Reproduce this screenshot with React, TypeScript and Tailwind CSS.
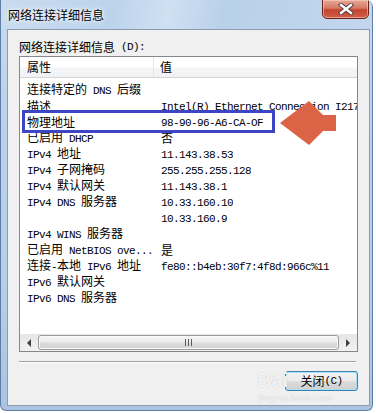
import React from "react";

const CJK = "font-['Noto_Sans_CJK_SC',sans-serif] text-[12px]";
const MONO = "font-['Liberation_Mono','DejaVu_Sans_Mono',monospace] text-[11px] tracking-[-0.6px]";

function T({ s }: { s: string }) {
  const parts = s.split(/([\x00-\x7f]+)/).filter((p) => p.length > 0);
  return (
    <>
      {parts.map((p, i) =>
        /^[\x00-\x7f]+$/.test(p) ? (
          <span key={i} className={MONO + " whitespace-pre"}>
            {p}
          </span>
        ) : (
          <span key={i} className={CJK}>
            {p}
          </span>
        )
      )}
    </>
  );
}

const rows: [string, string][] = [
  ["连接特定的 DNS 后缀", ""],
  ["描述", "Intel(R) Ethernet Connection I217-LM"],
  ["物理地址", "98-90-96-A6-CA-OF"],
  ["已启用 DHCP", "否"],
  ["IPv4 地址", "11.143.38.53"],
  ["IPv4 子网掩码", "255.255.255.128"],
  ["IPv4 默认网关", "11.143.38.1"],
  ["IPv4 DNS 服务器", "10.33.160.10"],
  ["", "10.33.160.9"],
  ["IPv4 WINS 服务器", ""],
  ["已启用 NetBIOS ove...", "是"],
  ["连接-本地 IPv6 地址", "fe80::b4eb:30f7:4f8d:966c%11"],
  ["IPv6 默认网关", ""],
  ["IPv6 DNS 服务器", ""],
];

export default function App() {
  return (
    <div className="relative w-[376px] h-[413px] bg-white overflow-hidden text-black">
      {/* Window */}
      <div className="w-[373px] h-[411px] flex flex-col rounded-tr-[7px] rounded-br-[6px] rounded-bl-[6px] border-r border-b border-l border-[#5f7ea6] bg-[linear-gradient(to_bottom,#c6daef_0%,#bcd2ea_30%,#b7cee8_70%,#a9c3e1_100%)] overflow-hidden">
        {/* Title bar */}
        <div className="relative h-[29px] shrink-0 flex items-center pl-[7px] bg-[linear-gradient(100deg,#c9dcf0_0%,#bcd3eb_30%,#cfe0f2_45%,#b9d0ea_60%,#c2d7ee_100%)]">
          <span className={CJK + " leading-[16px] [text-shadow:0_0_6px_#ffffff,0_0_3px_#ffffff]"}>网络连接详细信息</span>
          <div className="absolute right-[3px] top-[-1px] w-[47px] h-[20px] rounded-b-[5px] border border-[#6b2418] bg-[linear-gradient(to_bottom,#e6a896_0%,#d77a66_45%,#c4432e_55%,#d0604a_100%)] shadow-[inset_0_0_0_1px_rgba(255,220,210,0.5)] flex items-center justify-center">
            <svg width="16" height="12" viewBox="0 0 16 12">
              <path d="M3 2 L13 10 M13 2 L3 10" stroke="#4a3a3a" strokeWidth="4.2" strokeLinecap="square" />
              <path d="M3 2 L13 10 M13 2 L3 10" stroke="#ffffff" strokeWidth="2.4" strokeLinecap="square" />
            </svg>
          </div>
        </div>

        {/* Client area */}
        <div className="ml-[6px] w-[363px] h-[377px] shrink-0 border border-[#8c9cb0] bg-[#f0f0f0] flex flex-col">
          <div className="mt-[9px] ml-[11px] leading-[16px] h-[16px] flex items-center">
            <T s="网络连接详细信息 (D):" />
          </div>

          {/* List */}
          <div className="mt-[1px] ml-[11px] w-[339px] h-[296px] border border-[#828790] bg-white flex flex-col overflow-hidden">
            {/* Header */}
            <div className="h-[21px] shrink-0 flex border-b border-[#d5d5d5] bg-[linear-gradient(to_bottom,#ffffff_0%,#ffffff_50%,#f4f5f7_55%,#f1f2f4_100%)]">
              <div className="w-[134px] border-r border-[#e3e4e6] pl-[7px] flex items-center leading-[16px]">
                <T s="属性" />
              </div>
              <div className="pl-[6px] flex items-center leading-[16px]">
                <T s="值" />
              </div>
            </div>
            {/* Rows */}
            <div className="flex-1 pt-[3px] overflow-hidden">
              {rows.map(([k, v], i) => (
                <div key={i} className="h-[16px] flex items-center leading-[16px] whitespace-nowrap">
                  <div className="w-[135px] shrink-0 pl-[7px] overflow-hidden">
                    <T s={k} />
                  </div>
                  <div className="pl-[6px] overflow-hidden">
                    <T s={v} />
                  </div>
                </div>
              ))}
            </div>
            {/* Horizontal scrollbar */}
            <div className="h-[17px] shrink-0 flex items-center bg-[linear-gradient(to_bottom,#e6e6e6,#f2f2f2)]">
              <div className="w-[18px] h-[17px] flex items-center justify-center">
                <div className="w-0 h-0 border-y-[4px] border-y-transparent border-r-[4px] border-r-[#404040]" />
              </div>
              <div className="flex-1 h-[15px] rounded-[3px] border border-[#9a9a9a] bg-[linear-gradient(to_bottom,#f5f5f5_0%,#ececec_45%,#dcdcdc_55%,#d2d2d2_100%)] shadow-[inset_0_0_0_1px_#fafafa] flex items-center justify-center gap-[2px]">
                <div className="w-px h-[7px] bg-[#5a5a5a]" />
                <div className="w-px h-[7px] bg-[#5a5a5a]" />
                <div className="w-px h-[7px] bg-[#5a5a5a]" />
              </div>
              <div className="w-[18px] h-[17px] flex items-center justify-center">
                <div className="w-0 h-0 border-y-[4px] border-y-transparent border-l-[4px] border-l-[#404040]" />
              </div>
            </div>
          </div>

          {/* Separator */}
          <div className="mt-[9px] ml-[11px] w-[337px] h-px bg-[#a0a0a0]" />
          <div className="ml-[11px] w-[337px] h-px bg-white" />

          {/* Button */}
          <div className="mt-[8px] ml-[277px] w-[73px] h-[20px] rounded-[3px] border border-[#3c7fb1] bg-[linear-gradient(to_bottom,#f2f2f2_0%,#ebebeb_50%,#dddddd_51%,#cfcfcf_100%)] shadow-[inset_0_0_0_1px_#a7e1f9] flex items-center justify-center leading-[16px]">
            <T s="关闭(C)" />
          </div>
        </div>
      </div>

      {/* Watermark */}
      <div className="absolute left-[257px] top-[370px] font-['Liberation_Sans',sans-serif] font-bold text-[20px] leading-[20px] text-white/80 [text-shadow:0_0_1px_#b8b8b8]">
        Bai
      </div>
      <div className="absolute left-[258px] top-[393px] font-['Liberation_Serif',serif] text-[10px] leading-[10px] text-white/80 [text-shadow:0_0_1px_#b8b8b8]">
        jingyan.baidu.com
      </div>

      {/* Blue highlight rectangle */}
      <div className="absolute left-[22px] top-[110px] w-[253px] h-[23px] border-[3px] border-[#3d45c4]" />

      {/* Orange arrow */}
      <svg className="absolute left-0 top-0" width="376" height="413" viewBox="0 0 376 413">
        <polygon
          points="280,123 309,101 323,115 336,115 336,131 323,131 309,145"
          fill="#db6446"
        />
      </svg>
    </div>
  );
}
